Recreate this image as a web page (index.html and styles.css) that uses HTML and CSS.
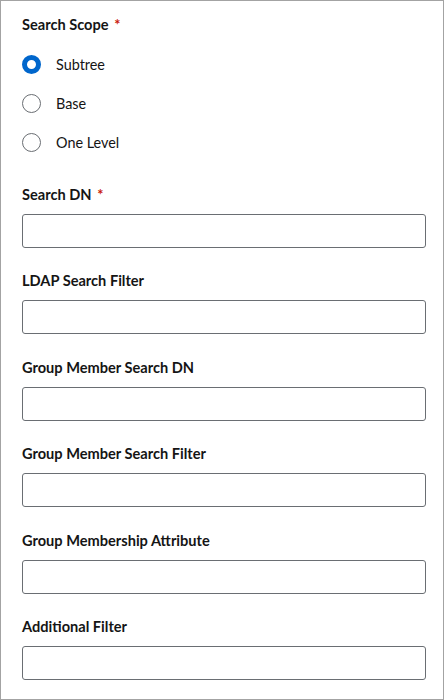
FILE: index.html
```html
<!DOCTYPE html>
<html>
<head>
<meta charset="utf-8">
<link rel="stylesheet" href="styles.css">
</head>
<body>
<div class="frame">
  <form class="form">
    <div class="group scope">
      <div class="label">Search Scope <span class="req">*</span></div>
      <div class="radios">
        <label class="radio"><span class="dot checked"></span><span class="rtext">Subtree</span></label>
        <label class="radio"><span class="dot"></span><span class="rtext">Base</span></label>
        <label class="radio"><span class="dot"></span><span class="rtext">One Level</span></label>
      </div>
    </div>
    <div class="group">
      <div class="label">Search DN <span class="req">*</span></div>
      <div class="input"></div>
    </div>
    <div class="group">
      <div class="label">LDAP Search Filter</div>
      <div class="input"></div>
    </div>
    <div class="group">
      <div class="label">Group Member Search DN</div>
      <div class="input"></div>
    </div>
    <div class="group">
      <div class="label">Group Member Search Filter</div>
      <div class="input"></div>
    </div>
    <div class="group">
      <div class="label">Group Membership Attribute</div>
      <div class="input"></div>
    </div>
    <div class="group">
      <div class="label">Additional Filter</div>
      <div class="input"></div>
    </div>
  </form>
</div>
</body>
</html>
```
FILE: styles.css
```css
html, body {
  margin: 0;
  padding: 0;
  background: #fff;
}
.frame {
  box-sizing: border-box;
  width: 444px;
  height: 700px;
  border: 1px solid #a3a3a3;
  overflow: hidden;
  font-family: Lato, "Liberation Sans", sans-serif;
  color: #151515;
}
.form {
  display: flex;
  flex-direction: column;
  padding: 15px 17px 0 21px;
  gap: 24.4px;
}
.group {
  display: flex;
  flex-direction: column;
}
.group.scope {
  margin-bottom: 9.6px;
}
.label {
  font-size: 14.6px;
  font-weight: 700;
  line-height: 18px;
  margin-bottom: 10px;
}
.req {
  color: #c9190b;
  margin-left: 2px;
}
.radios {
  display: flex;
  flex-direction: column;
  gap: 19px;
  padding-top: 10px;
}
.radio {
  display: flex;
  align-items: center;
  height: 20px;
  font-size: 14.4px;
}
.dot {
  box-sizing: border-box;
  width: 19px;
  height: 19px;
  border-radius: 50%;
  border: 1px solid #6a6e73;
  background: #fff;
  flex: none;
}
.dot.checked {
  border: 5px solid #0066cc;
}
.rtext {
  margin-left: 15px;
}
.input {
  box-sizing: border-box;
  height: 34px;
  border: 1px solid #6a6e73;
  border-radius: 3px;
  background: #fff;
}
```
